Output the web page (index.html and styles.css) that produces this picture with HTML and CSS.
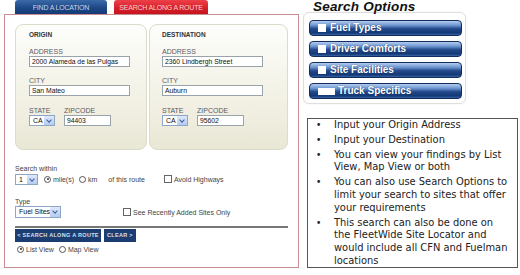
FILE: index.html
```html
<!DOCTYPE html>
<html lang="en">
<head>
    <meta charset="UTF-8">
    <title>Search Along a Route</title>
    <link rel="stylesheet" href="styles.css">
</head>
<body>
<div class="page">

    <!-- left: route search form -->
    <div class="left-col">
        <div class="tabs">
            <div class="tab tab-find">FIND A LOCATION</div>
            <div class="tab tab-route">SEARCH ALONG A ROUTE</div>
        </div>

        <div class="route-box">
            <div class="addr-row">
                <div class="addr-panel origin">
                    <div class="panel-title">ORIGIN</div>
                    <div class="field-label">ADDRESS</div>
                    <div class="text-input">2000 Alameda de las Pulgas</div>
                    <div class="field-label gap">CITY</div>
                    <div class="text-input">San Mateo</div>
                    <div class="state-row">
                        <div class="state-col">
                            <div class="field-label">STATE</div>
                            <div class="select sel-state"><span>CA</span><i class="arrow"></i></div>
                        </div>
                        <div class="zip-col">
                            <div class="field-label">ZIPCODE</div>
                            <div class="text-input zip">94403</div>
                        </div>
                    </div>
                </div>
                <div class="addr-panel dest">
                    <div class="panel-title">DESTINATION</div>
                    <div class="field-label">ADDRESS</div>
                    <div class="text-input">2360 Lindbergh Street</div>
                    <div class="field-label gap">CITY</div>
                    <div class="text-input">Auburn</div>
                    <div class="state-row">
                        <div class="state-col">
                            <div class="field-label">STATE</div>
                            <div class="select sel-state"><span>CA</span><i class="arrow"></i></div>
                        </div>
                        <div class="zip-col">
                            <div class="field-label">ZIPCODE</div>
                            <div class="text-input zip">95602</div>
                        </div>
                    </div>
                </div>
            </div>

            <div class="form-label within-label">Search within</div>
            <div class="form-row">
                <div class="select sel-miles"><span>1</span><i class="arrow"></i></div>
                <span class="radio checked first"></span><span class="opt">mile(s)</span>
                <span class="radio"></span><span class="opt">km</span>
                <span class="opt route-txt">of this route</span>
                <span class="checkbox avoid"></span><span class="opt">Avoid Highways</span>
            </div>

            <div class="form-label type-label">Type</div>
            <div class="form-row">
                <div class="select sel-type"><span>Fuel Sites</span><i class="arrow"></i></div>
                <span class="checkbox recent"></span><span class="opt">See Recently Added Sites Only</span>
            </div>

            <div class="btn-row">
                <div class="nav-btn btn-search">&lt; SEARCH ALONG A ROUTE</div>
                <div class="nav-btn btn-clear">CLEAR &gt;</div>
            </div>

            <div class="view-row">
                <span class="radio checked"></span><span class="opt">List View</span>
                <span class="radio"></span><span class="opt">Map View</span>
            </div>
        </div>
    </div>

    <!-- right: search options + tips -->
    <div class="right-col">
        <h2 class="options-title">Search Options</h2>
        <div class="options-panel">
            <div class="opt-btn"><i class="page-icon"></i>Fuel Types</div>
            <div class="opt-btn"><i class="page-icon"></i>Driver Comforts</div>
            <div class="opt-btn"><i class="page-icon"></i>Site Facilities</div>
            <div class="opt-btn"><i class="page-icon wide"></i>Truck Specifics</div>
        </div>

        <ul class="tips">
            <li><span class="dot">&bull;</span><span>Input your Origin Address</span></li>
            <li><span class="dot">&bull;</span><span>Input your Destination</span></li>
            <li><span class="dot">&bull;</span><span>You can view your findings by List<br>View, Map View or both</span></li>
            <li><span class="dot">&bull;</span><span>You can also use Search Options to<br>limit your search to sites that offer<br>your requirements</span></li>
            <li><span class="dot">&bull;</span><span>This search can also be done on<br>the FleetWide Site Locator and<br>would include all CFN and Fuelman<br>locations</span></li>
        </ul>
    </div>

</div>
</body>
</html>
```

FILE: styles.css
```css
body {
    margin: 0;
    padding: 0;
    background: #ffffff;
    font-family: "Liberation Sans", Arial, sans-serif;
    color: #333;
}

.page {
    display: flex;
    width: 520px;
    height: 275px;
    overflow: hidden;
}

/* left column */
.left-col {
    width: 303px;
    flex-shrink: 0;
}

.tabs {
    display: flex;
    gap: 7px;
    padding-left: 15px;
    height: 14px;
}

.tab {
    height: 14px;
    line-height: 15px;
    text-align: center;
    font-size: 7px;
    border-radius: 3px 3px 0 0;
    letter-spacing: -0.2px;
    white-space: nowrap;
}

.tab-find {
    width: 92px;
    background: linear-gradient(#3b6aa8, #1b4584 60%, #163b74);
    color: #c9d8ee;
}

.tab-route {
    width: 94px;
    background: linear-gradient(#ee4048, #d41f2a 60%, #c5141f);
    color: #f8cfd2;
}

.route-box {
    margin-left: 4px;
    width: 295px;
    height: 254px;
    box-sizing: border-box;
    border: 1px solid #c88d92;
    padding: 9px 10px 0 10px;
}

.addr-row {
    display: flex;
    gap: 2px;
}

.addr-panel {
    height: 126px;
    box-sizing: border-box;
    border: 1px solid #dddccb;
    border-radius: 8px;
    background: linear-gradient(#fdfdfb, #f4f3e8 50%, #e9e8d6);
    padding-top: 5px;
}

.origin {
    width: 132px;
    padding-left: 13px;
}

.dest {
    width: 139px;
    padding-left: 12px;
}

.panel-title {
    font-size: 6.5px;
    font-weight: bold;
    line-height: 10px;
    color: #333;
    margin-bottom: 7px;
}

.field-label {
    font-size: 7px;
    line-height: 9px;
    color: #5a5a66;
    white-space: nowrap;
}

.field-label.gap {
    margin-top: 9px;
}

.text-input {
    width: 101px;
    height: 11px;
    box-sizing: border-box;
    border: 1px solid #9aa3ab;
    background: #fff;
    font-size: 6.8px;
    line-height: 9px;
    padding-left: 2px;
    color: #111;
    white-space: nowrap;
    overflow: hidden;
}

.text-input.zip {
    width: 47px;
}

.state-row {
    display: flex;
    gap: 9px;
    margin-top: 10px;
}

/* fake select boxes */
.select {
    display: flex;
    justify-content: space-between;
    box-sizing: border-box;
    border: 1px solid #8ea6c6;
    background: #fff;
    font-size: 7px;
    color: #111;
    white-space: nowrap;
}

.select span {
    padding-left: 3px;
}

.select .arrow {
    width: 10px;
    flex-shrink: 0;
    background: linear-gradient(#dfe9fb, #b5cbf0);
    position: relative;
}

.select .arrow::after {
    content: "";
    position: absolute;
    left: 3px;
    top: 2px;
    width: 3px;
    height: 3px;
    border-right: 1.5px solid #3a5d9c;
    border-bottom: 1.5px solid #3a5d9c;
    transform: rotate(45deg);
}

.sel-state {
    width: 26px;
    height: 11px;
    line-height: 9px;
}

.sel-miles {
    width: 23px;
    height: 11px;
    line-height: 9px;
}

.sel-type {
    width: 46px;
    height: 12px;
    line-height: 10px;
}

.form-label {
    font-size: 7px;
    line-height: 9px;
    color: #444;
}

.within-label {
    margin-top: 14px;
}

.type-label {
    margin-top: 12px;
}

.form-row {
    display: flex;
    align-items: center;
    height: 12px;
}

.opt {
    font-size: 7px;
    color: #444;
    margin-left: 2px;
    white-space: nowrap;
}

.radio {
    width: 5px;
    height: 5px;
    flex-shrink: 0;
    border: 1px solid #555;
    border-radius: 50%;
    margin-left: 5px;
    position: relative;
    background: #fff;
}

.radio.first {
    margin-left: 6px;
}

.radio.checked::after {
    content: "";
    position: absolute;
    left: 1.5px;
    top: 1.5px;
    width: 2px;
    height: 2px;
    border-radius: 50%;
    background: #333;
}

.route-txt {
    margin-left: 11px;
}

.checkbox {
    width: 6px;
    height: 6px;
    flex-shrink: 0;
    border: 1px solid #666;
    background: #fff;
}

.checkbox.avoid {
    margin-left: 19px;
}

.checkbox.recent {
    margin-left: 62px;
}

.btn-row {
    display: flex;
    gap: 3px;
    margin-top: 8px;
    padding-top: 1px;
    border-top: 2px solid #777;
}

.nav-btn {
    height: 13px;
    line-height: 13px;
    background: #1c3d72;
    color: #d7e0ee;
    font-size: 5.5px;
    font-weight: bold;
    letter-spacing: 0.3px;
    text-align: center;
    white-space: nowrap;
}

.btn-search {
    width: 86px;
}

.btn-clear {
    width: 32px;
}

.view-row {
    display: flex;
    align-items: center;
    height: 12px;
    margin-top: 1px;
}

.view-row .radio:first-child {
    margin-left: 2px;
}

/* right column */
.right-col {
    width: 217px;
}

.options-title {
    margin: 0;
    padding-left: 10px;
    height: 12px;
    font-size: 13.5px;
    font-style: italic;
    font-weight: bold;
    line-height: 14px;
    letter-spacing: 0.2px;
    color: #111;
    white-space: nowrap;
}

.options-panel {
    width: 163px;
    height: 92px;
    box-sizing: border-box;
    border: 1px solid #dedede;
    border-radius: 6px;
    box-shadow: 0 0 2px rgba(0, 0, 0, 0.08);
    padding: 7px 0 0 5px;
    display: flex;
    flex-direction: column;
    gap: 5px;
}

.opt-btn {
    width: 153px;
    height: 16px;
    box-sizing: border-box;
    border: 1px solid #112d5e;
    border-radius: 4px;
    background: linear-gradient(#b5cdef 0%, #6f98d2 30%, #24498a 55%, #123876 85%, #3a64a4 100%);
    color: #fff;
    font-size: 10px;
    font-weight: bold;
    line-height: 14px;
    text-shadow: 0 0 1px #0b2250;
    display: flex;
    align-items: center;
    padding-left: 8px;
}

.page-icon {
    width: 8px;
    height: 8px;
    background: #fff;
    margin-right: 4px;
}

.page-icon.wide {
    width: 17px;
    height: 7px;
    margin-right: 3px;
}

.tips {
    list-style: none;
    margin: 14px 0 0 4px;
    padding: 0 2px 0 8px;
    width: 211px;
    height: 150px;
    box-sizing: border-box;
    border: 1px solid #555;
    font-family: "DejaVu Sans Condensed", "DejaVu Sans", sans-serif;
    font-stretch: condensed;
    font-size: 11px;
    line-height: 12.8px;
    color: #222;
    white-space: nowrap;
}

.tips li {
    display: grid;
    grid-template-columns: 18px 1fr;
    margin-bottom: 2px;
}

.dot {
    font-size: 10px;
}
```
